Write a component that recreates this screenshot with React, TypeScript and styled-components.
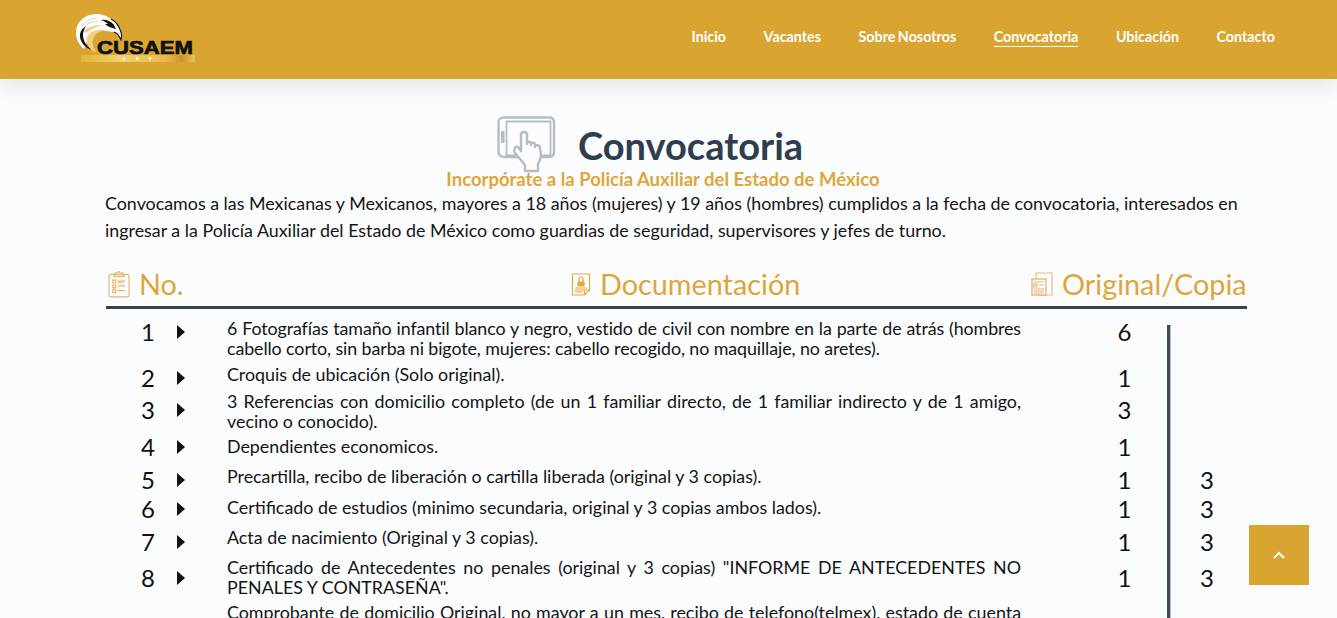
import React from 'react';
import styled, { createGlobalStyle } from 'styled-components';

const gold = '#d9a430';
const orange = '#dea63a';
const slate = '#2f3e4e';
const page = '#fbfcfe';

const Global = createGlobalStyle`
  html, body { margin: 0; padding: 0; height: 100%; overflow: hidden; background: ${page}; }
  body { font-family: Lato, "Liberation Sans", sans-serif; color: #111; }
`;

const Header = styled.header`
  height: 79px;
  background: ${gold};
  box-shadow: 0 4px 24px rgba(60, 70, 80, 0.16);
  display: flex;
  justify-content: space-between;
  padding: 13px 62px 0 75px;
  box-sizing: border-box;
  position: relative;
`;

const Nav = styled.nav`
  display: flex;
  gap: 37.5px;
  height: 34px;
  margin-top: 15px;
  align-items: flex-start;
`;

const NavLink = styled.a<{ $active?: boolean }>`
  color: #fff;
  font-size: 14.3px;
  font-weight: 700;
  line-height: 17px;
  word-spacing: -1px;
  padding-bottom: 1px;
  border-bottom: 1px solid ${p => (p.$active ? '#fff' : 'transparent')};
`;

const Main = styled.main`
  width: 1142px;
  margin-left: 105px;
`;

const TitleRow = styled.div`
  display: flex;
  align-items: flex-start;
  gap: 21px;
  padding: 37px 0 0 392px;
  height: 52px;
`;

const Title = styled.h1`
  margin: 7px 0 0;
  font-size: 38px;
  font-weight: 700;
  line-height: 44px;
  color: ${slate};
`;

const Subtitle = styled.h2`
  margin: 0;
  padding-right: 26px;
  font-size: 18.5px;
  font-weight: 700;
  line-height: 22px;
  color: ${orange};
  text-align: center;
`;

const Intro = styled.p`
  margin: 0;
  font-size: 17.85px;
  line-height: 27px;
  color: #141414;
  width: 1140px;
`;

const Heads = styled.div`
  display: grid;
  grid-template-columns: 463px 460px 1fr;
  margin: 20px 0 0 1px;
  padding: 0 0 2px 2px;
  border-bottom: 3px solid #37454f;
  height: 40px;
  width: 1139px;
`;

const Head = styled.div`
  display: flex;
  align-items: center;
  gap: 9px;
  font-size: 28.8px;
  line-height: 40px;
  color: ${orange};
  white-space: nowrap;
`;

const Row = styled.div<{ $h: number }>`
  display: grid;
  grid-template-columns: 32px 34px 29px 794px 146px 1fr;
  height: ${p => p.$h}px;
  padding-left: 27px;
  align-items: start;
`;

const Num = styled.div<{ $top: number }>`
  font-size: 24px;
  line-height: 24px;
  text-align: center;
  margin-top: ${p => p.$top}px;
`;

const Arrow = styled.div<{ $top: number }>`
  justify-self: center;
  width: 0;
  height: 0;
  margin-top: ${p => p.$top + 5}px;
  border-top: 7px solid transparent;
  border-bottom: 7px solid transparent;
  border-left: 8px solid #111;
`;

const Text = styled.div<{ $top: number; $clip?: boolean; $tight?: boolean }>`
  font-size: 17.85px;
  line-height: 20px;
  text-align: justify;
  color: #141414;
  margin-top: ${p => p.$top}px;
  ${p => p.$tight && 'letter-spacing: -0.1px;'}
  ${p => p.$clip && 'text-align-last: justify; white-space: nowrap; overflow: hidden;'}
`;

const Orig = styled.div<{ $top: number }>`
  font-size: 24px;
  line-height: 24px;
  text-align: center;
  margin: ${p => p.$top}px 0 0 60px;
  width: 87px;
`;

const Copies = styled.div<{ $first?: boolean; $top?: number }>`
  align-self: stretch;
  border-left: 3px solid #3c4c5a;
  box-shadow: inset 1px 0 0 #b4bcc2;
  margin-top: ${p => (p.$first ? '16px' : '0')};
  font-size: 24px;
  line-height: 24px;
  padding: ${p => p.$top ?? 0}px 0 0 30px;
`;

const ToTop = styled.a`
  position: fixed;
  left: 1249px;
  top: 525px;
  width: 60px;
  height: 60px;
  background: ${gold};
  display: flex;
  align-items: center;
  justify-content: center;
`;

const Logo = () => (
  <svg width="122" height="50" viewBox="0 0 122 50" aria-label="CUSAEM">
    <defs>
      <linearGradient id="bar" x1="0" x2="1">
        <stop offset="0" stopColor="#e3b43c" />
        <stop offset="0.35" stopColor="#f3d873" />
        <stop offset="0.75" stopColor="#e8bc4e" />
        <stop offset="0.88" stopColor="#cf9030" />
        <stop offset="1" stopColor="#edc45a" />
      </linearGradient>
    </defs>
    <path d="M1 20C1 9 9 2 20 1c7 0 12 2 16 5 3 1 6 5 8 9 3 4 3 9 2 12-2-5-4-7-7-8-3 0-8-2-12-1-6 0-12 3-14 8L9 36C4 32 1 26 1 20Z" fill="#fff" />
    <path d="M6 14c4-5 9-8 15-9M10 13c4-3 8-5 13-5" stroke="#c9c9c9" strokeWidth="0.8" fill="none" />
    <path d="M5 21c1-4 3-6 6-8-2 3-3 6-3 9 0 5 3 11 9 15-7-2-13-9-12-16Z" fill="#111" />
    <path d="M9 18c5-5 12-7 21-5-7 0-12 2-16 5-2 2-3 2-5 0Z" fill="#f0cf83" />
    <path d="M12 24c2-5 9-8 18-7-4 1-9 3-11 7-3 5-1 11 3 15-3 0-5-1-6-3-4-4-5-8-4-12Z" fill="#f0cf83" />
    <path d="M26 7c5-1 10 1 13 5l2 4c-4-1-8-2-11-5h3c-2-2-4-3-7-4Z" fill="#15110a" />
    <path d="M36 6c4 2 8 7 10 13 1 3 1 5 0 8-2-5-4-7-7-8" stroke="#111" strokeWidth="1.1" fill="none" />
    <text x="22" y="41" fontFamily="Liberation Sans, sans-serif" fontWeight="700" fontSize="18.5" textLength="96" lengthAdjust="spacingAndGlyphs" stroke="#111" strokeWidth="0.7" fill="#111">CUSAEM</text>
    <rect x="6" y="42" width="114" height="7" fill="url(#bar)" opacity="0.9" />
    <circle cx="49" cy="45.5" r="1.3" fill="#fff" />
    <circle cx="62" cy="45.5" r="1.3" fill="#fff" />
    <circle cx="75" cy="45.5" r="1.3" fill="#fff" />
  </svg>
);

const TabletIcon = () => (
  <svg width="60" height="58" viewBox="0 0 60 58" fill="none" stroke="#b4bdc5" strokeWidth="2.4" strokeLinejoin="round" strokeLinecap="round" style={{ flexShrink: 0 }}>
    <path d="M7 41c-3 0-5.500-2-5.500-5V6C1.500 3 4 1.500 7 1.500h45c3 0 5 1.500 5 4.500v30c0 3-2 5-5 5Z" />
    <path d="M9.500 5.500h44v34h-44Z" strokeWidth="1.8" />
    <rect x="4" y="15" width="3.500" height="12" fill="#b4bdc5" stroke="none" />
    <path d="M28 55v-6L18 37c-2-3 0-7 3-6l3 4V19c0-4 6-4 6 0v9c0-3 4-3 4 0v1c0-3 4-3 4 0v2c0-3 5-2 5 1l1 7c0 4-2 7-3 9v7Z" fill={page} />
  </svg>
);

const ListIcon = () => (
  <svg width="22" height="28" viewBox="0 0 23 28" fill="none" stroke="#e6b469" strokeWidth="1.2">
    <rect x="1" y="4" width="21" height="23.5" rx="2" />
    <path d="M7 4V2.500h3C10.500 1 12.500 1 13 2.500h3V4l1 2H6Z" />
    <path d="M5 10h3v3H5ZM5 15h3v3H5ZM5 20h3v3H5ZM10 11h8M10 13h6M10 16h8M10 21h8" />
  </svg>
);

const DocIcon = () => (
  <svg width="20" height="23" viewBox="0 0 20 23" fill="none" stroke="#e0aa3c" strokeWidth="1.2">
    <path d="M1.500 1h17v16l-5 5h-12Z" />
    <path d="M18.500 17h-5v5" />
    <path d="M8 9V6c0-3 4-3 4 0v3" />
    <path d="M7 9h6v4H7Z" fill="#e0aa3c" />
    <path d="M4 15h12M4 17h9M4 19h8" />
  </svg>
);

const PaperIcon = () => (
  <svg width="22" height="24" viewBox="0 0 22 24" fill="none" stroke="#e8b980" strokeWidth="1.2">
    <path d="M5 7V1h16v22H7" />
    <rect x="1" y="7" width="14" height="16" fill={page} stroke="#e6ae5e" />
    <path d="M3 10h10M3 12h3v3H3ZM8 13h5M3 17h10M3 19h10M3 21h10" stroke="#e6b778" />
  </svg>
);

const rows: { h: number; t: number; top: number; n: string; x: string; o: string; c?: string }[] = [
  { h: 52, t: 9, top: 11, n: '1', x: '6 Fotografías tamaño infantil blanco y negro, vestido de civil con nombre en la parte de atrás (hombres cabello corto, sin barba ni bigote, mujeres: cabello recogido, no maquillaje, no aretes).', o: '6' },
  { h: 27, t: 3, top: 5, n: '2', x: 'Croquis de ubicación (Solo original).', o: '1' },
  { h: 44, t: 3, top: 10, n: '3', x: '3 Referencias con domicilio completo (de un 1 familiar directo, de 1 familiar indirecto y de 1 amigo, vecino o conocido).', o: '3' },
  { h: 32, t: 4, top: 3, n: '4', x: 'Dependientes economicos.', o: '1' },
  { h: 30, t: 2, top: 4, n: '5', x: 'Precartilla, recibo de liberación o cartilla liberada (original y 3 copias).', o: '1', c: '3' },
  { h: 30, t: 3, top: 3, n: '6', x: 'Certificado de estudios (minimo secundaria, original y 3 copias ambos lados).', o: '1', c: '3' },
  { h: 32, t: 3, top: 6, n: '7', x: 'Acta de nacimiento (Original y 3 copias).', o: '1', c: '3' },
  { h: 42, t: 1, top: 10, n: '8', x: 'Certificado de Antecedentes no penales (original y 3 copias) "INFORME DE ANTECEDENTES NO PENALES Y CONTRASEÑA".', o: '1', c: '3' },
];

export default function App() {
  return (
    <>
      <Global />
      <Header>
        <Logo />
        <Nav>
          <NavLink>Inicio</NavLink>
          <NavLink>Vacantes</NavLink>
          <NavLink>Sobre Nosotros</NavLink>
          <NavLink $active>Convocatoria</NavLink>
          <NavLink>Ubicación</NavLink>
          <NavLink>Contacto</NavLink>
        </Nav>
      </Header>
      <Main>
        <TitleRow>
          <TabletIcon />
          <Title>Convocatoria</Title>
        </TitleRow>
        <Subtitle>Incorpórate a la Policía Auxiliar del Estado de México</Subtitle>
        <Intro>
          Convocamos a las Mexicanas y Mexicanos, mayores a 18 años (mujeres) y 19 años (hombres) cumplidos a la fecha de convocatoria, interesados en ingresar a la Policía Auxiliar del Estado de México como guardias de seguridad, supervisores y jefes de turno.
        </Intro>
        <Heads>
          <Head><ListIcon />No.</Head>
          <Head><DocIcon />Documentación</Head>
          <Head><PaperIcon />Original/Copia</Head>
        </Heads>
        {rows.map((r, i) => (
          <Row key={r.n} $h={r.h}>
            <Num $top={r.top}>{r.n}</Num>
            <Arrow $top={r.top} />
            <span />
            <Text $top={r.t} $tight={i === 0}>{r.x}</Text>
            <Orig $top={r.top}>{r.o}</Orig>
            <Copies $first={i === 0} $top={r.top}>{r.c}</Copies>
          </Row>
        ))}
        <Row $h={60}>
          <span /><span /><span />
          <Text $top={4} $clip>Comprobante de domicilio Original, no mayor a un mes, recibo de telefono(telmex), estado de cuenta</Text>
          <span />
          <Copies />
        </Row>
      </Main>
      <ToTop>
        <svg width="14" height="9" viewBox="0 0 14 9" fill="none" stroke="#fff" strokeWidth="2"><path d="M2 7l5-5 5 5" /></svg>
      </ToTop>
    </>
  );
}
